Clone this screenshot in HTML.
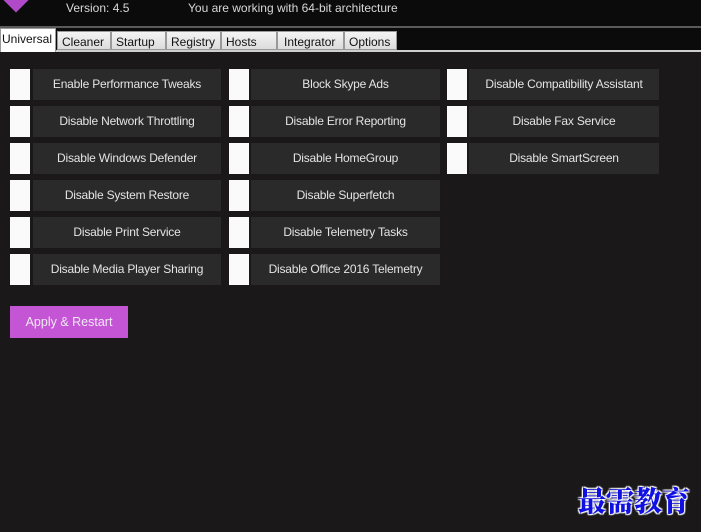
<!DOCTYPE html><html><head><style>
body{margin:0;width:701px;height:532px;background:#1a1819;font-family:"Liberation Sans",sans-serif;position:relative;overflow:hidden}
.hd{position:absolute;left:0;top:0;width:701px;height:26px;background:#0c0b0c;border-bottom:2px solid #5a5a5a}
.hd span{position:absolute;top:1px;color:#d8d8d8;font-size:12px}
.logo{position:absolute;left:5px;top:-14px;width:22px;height:22px;background:#b04ac8;transform:rotate(45deg)}
.tabbar{position:absolute;left:0;top:28px;width:701px;height:22px;background:#0c0b0c;border-bottom:2px solid #cfcfcf}
.t{position:absolute;top:3px;height:19px;background:linear-gradient(#f4f4f4,#dcdcdc);border:1px solid #999;box-sizing:border-box;font-size:12px;color:#111;padding:3px 0 0 4px}
.t.s{top:0;height:24px;background:#fff;border-bottom:none;padding-left:1px}
.cb{position:absolute;width:20px;height:31px;background:#fafafa}
.b{position:absolute;height:31px;background:#2b2a2b;color:#e4e4e4;font-size:12px;text-align:center;line-height:31px;white-space:nowrap;letter-spacing:-0.2px}
.ap{position:absolute;left:10px;top:306px;width:118px;height:32px;background:#c456d6;color:#f0e8f2;font-size:12.5px;line-height:32px;text-align:center}
.wm{position:absolute;left:578px;top:480px;font-family:"Noto Serif CJK SC",serif;font-weight:900;font-size:28px;color:#1010e0;text-shadow:0 0 2px #fff,1px 1px 1px #fff,-1px -1px 1px #fff,1px -1px 1px #fff,-1px 1px 1px #fff}
</style></head><body>
<div class="hd"><div class="logo"></div><span style="left:66px">Version: 4.5</span><span style="left:188px">You are working with 64-bit architecture</span></div>
<div class="tabbar">
<div class="t s" style="left:0;width:56px">Universal</div>
<div class="t" style="left:57px;width:54px">Cleaner</div>
<div class="t" style="left:111px;width:55px">Startup</div>
<div class="t" style="left:166px;width:55px">Registry</div>
<div class="t" style="left:221px;width:56px">Hosts</div>
<div class="t" style="left:277px;width:67px;padding-left:6px">Integrator</div>
<div class="t" style="left:344px;width:53px">Options</div>
</div>
<div class="cb" style="left:10px;top:69px"></div><div class="b" style="left:33px;top:69px;width:188px">Enable Performance Tweaks</div>
<div class="cb" style="left:10px;top:106px"></div><div class="b" style="left:33px;top:106px;width:188px">Disable Network Throttling</div>
<div class="cb" style="left:10px;top:143px"></div><div class="b" style="left:33px;top:143px;width:188px">Disable Windows Defender</div>
<div class="cb" style="left:10px;top:180px"></div><div class="b" style="left:33px;top:180px;width:188px">Disable System Restore</div>
<div class="cb" style="left:10px;top:217px"></div><div class="b" style="left:33px;top:217px;width:188px">Disable Print Service</div>
<div class="cb" style="left:10px;top:254px"></div><div class="b" style="left:33px;top:254px;width:188px">Disable Media Player Sharing</div>
<div class="cb" style="left:229px;top:69px"></div><div class="b" style="left:251px;top:69px;width:189px">Block Skype Ads</div>
<div class="cb" style="left:229px;top:106px"></div><div class="b" style="left:251px;top:106px;width:189px">Disable Error Reporting</div>
<div class="cb" style="left:229px;top:143px"></div><div class="b" style="left:251px;top:143px;width:189px">Disable HomeGroup</div>
<div class="cb" style="left:229px;top:180px"></div><div class="b" style="left:251px;top:180px;width:189px">Disable Superfetch</div>
<div class="cb" style="left:229px;top:217px"></div><div class="b" style="left:251px;top:217px;width:189px">Disable Telemetry Tasks</div>
<div class="cb" style="left:229px;top:254px"></div><div class="b" style="left:251px;top:254px;width:189px">Disable Office 2016 Telemetry</div>
<div class="cb" style="left:447px;top:69px"></div><div class="b" style="left:469px;top:69px;width:190px">Disable Compatibility Assistant</div>
<div class="cb" style="left:447px;top:106px"></div><div class="b" style="left:469px;top:106px;width:190px">Disable Fax Service</div>
<div class="cb" style="left:447px;top:143px"></div><div class="b" style="left:469px;top:143px;width:190px">Disable SmartScreen</div>
<div class="ap">Apply &amp; Restart</div>
<div class="wm">最需教育</div>
</body></html>
